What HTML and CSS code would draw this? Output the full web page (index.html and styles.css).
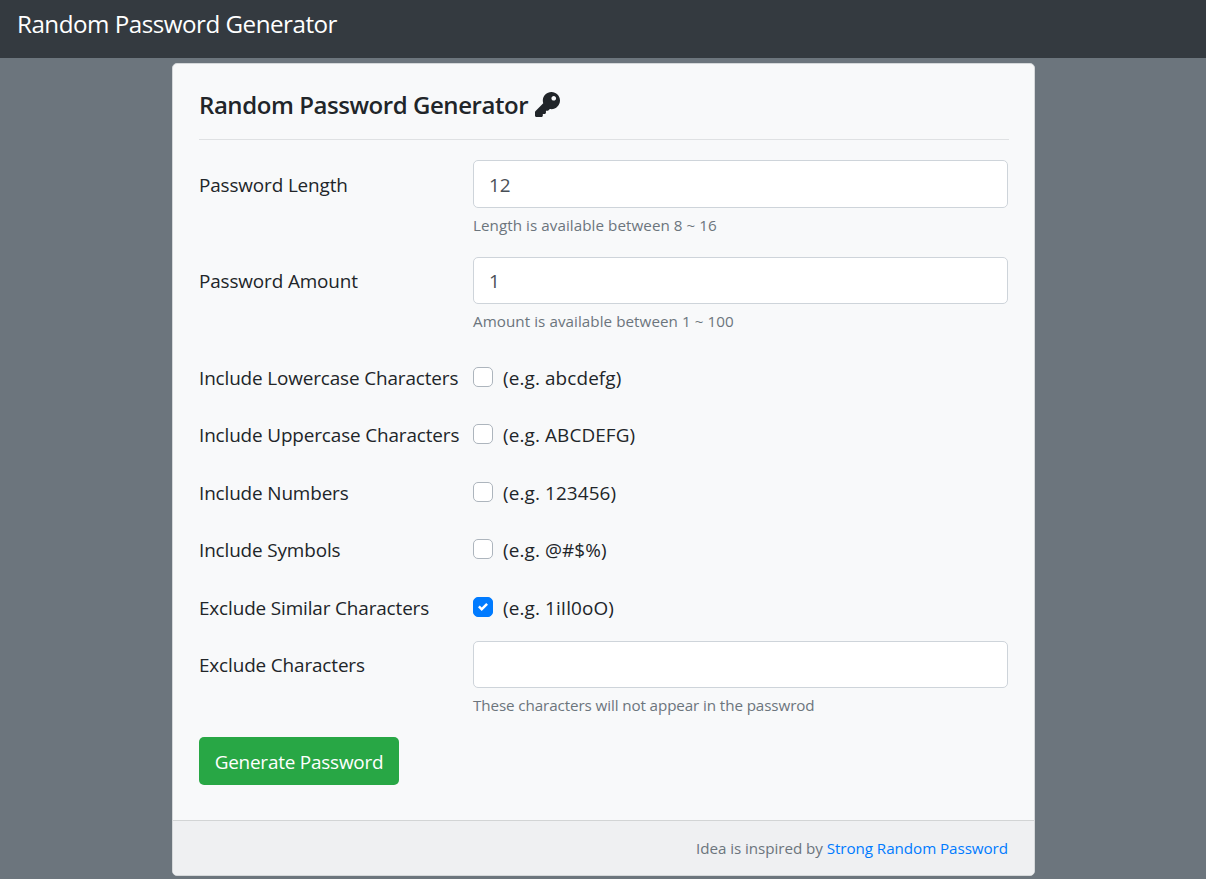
FILE: index.html
```html
<!DOCTYPE html>
<html lang="en">
<head>
<meta charset="utf-8">
<title>Random Password Generator</title>
<link rel="stylesheet" href="styles.css">
</head>
<body>
<nav class="navbar"><span class="brand">Random Password Generator</span></nav>
<main class="card">
  <div class="card-body">
    <h1 class="title"><span>Random Password Generator</span>
      <svg class="key" viewBox="0 0 512 512"><path fill="currentColor" d="M512 176.001C512 273.203 433.202 352 336 352c-11.22 0-22.19-1.062-32.827-3.069l-24.012 27.014A23.999 23.999 0 0 1 261.223 384H224v40c0 13.255-10.745 24-24 24h-40v40c0 13.255-10.745 24-24 24H24c-13.255 0-24-10.745-24-24v-78.059c0-6.365 2.529-12.47 7.029-16.971l161.802-161.802C163.108 213.814 160 195.271 160 176 160 78.798 238.797.001 335.999 0 433.488-.001 512 78.511 512 176.001zM336 128c0 26.51 21.49 48 48 48s48-21.49 48-48-21.49-48-48-48-48 21.49-48 48z"/></svg>
    </h1>
    <hr class="rule">
    <form class="form">
      <div class="row field">
        <label class="label" for="length">Password Length</label>
        <div><input class="input" id="length" type="text" value="12"><small class="hint">Length is available between 8 ~ 16</small></div>
      </div>
      <div class="row field">
        <label class="label" for="amount">Password Amount</label>
        <div><input class="input" id="amount" type="text" value="1"><small class="hint">Amount is available between 1 ~ 100</small></div>
      </div>
      <div class="row option">
        <span class="label">Include Lowercase Characters</span>
        <label class="check"><span class="box"></span><span>(e.g. abcdefg)</span></label>
      </div>
      <div class="row option">
        <span class="label">Include Uppercase Characters</span>
        <label class="check"><span class="box"></span><span>(e.g. ABCDEFG)</span></label>
      </div>
      <div class="row option">
        <span class="label">Include Numbers</span>
        <label class="check"><span class="box"></span><span>(e.g. 123456)</span></label>
      </div>
      <div class="row option">
        <span class="label">Include Symbols</span>
        <label class="check"><span class="box"></span><span>(e.g. @#$%)</span></label>
      </div>
      <div class="row option">
        <span class="label">Exclude Similar Characters</span>
        <label class="check"><span class="box checked"><svg class="tick" viewBox="0 0 8 8"><path fill="#fff" d="M6.564.75l-3.59 3.612-1.538-1.55L0 4.26 2.974 7.25 8 2.193z"/></svg></span><span>(e.g. 1iIl0oO)</span></label>
      </div>
      <div class="row field">
        <label class="label" for="exclude">Exclude Characters</label>
        <div><input class="input" id="exclude" type="text"><small class="hint exclude-hint">These characters will not appear in the passwrod</small></div>
      </div>
      <button class="button" type="button">Generate Password</button>
    </form>
  </div>
  <footer class="footer"><span>Idea is inspired by <a class="link" href="#">Strong Random Password</a></span></footer>
</main>
</body>
</html>
```
FILE: styles.css
```css
* { box-sizing: border-box; }
body { margin: 0; height: 879px; overflow: hidden; background: #6c757d; color: #212529; font-family: "Open Sans", "Noto Sans", sans-serif; font-size: 18.9px; line-height: 30px; letter-spacing: -0.13px; }
.navbar { height: 58px; padding: 5px 17px; background: #343a40; color: #fff; }
.brand { display: block; font-size: 24.2px; line-height: 38px; letter-spacing: -0.5px; white-space: nowrap; }
.card { width: 863px; height: 813px; margin: 5px 0 0 172px; display: flex; flex-direction: column; background: #f8f9fa; border: 1px solid #d5d8da; border-radius: 5px; overflow: hidden; }
.card-body { flex: 1; padding: 25px 25px 0 26px; }
.title { display: flex; align-items: center; gap: 7px; margin: 0; height: 30px; font-size: 24px; font-weight: 600; line-height: 30px; letter-spacing: -0.44px; white-space: nowrap; }
.title > span { padding-top: 1px; }
.key { width: 25px; height: 25px; margin-top: 1px; }
.rule { margin: 20px 0 20.45px; border: 0; border-top: 1px solid #dfe1e3; }
.form { margin: 0; }
.row { display: grid; grid-template-columns: 274px 535px; }
.field { height: 96.25px; }
.option { height: 57.52px; align-content: start; }
.label { line-height: 30px; padding-top: 10px; white-space: nowrap; }
.field .label { padding-top: 9.7px; }
.input { display: block; width: 100%; height: 47.5px; padding: 2px 15px 0; border: 1px solid #ced4da; border-radius: 5px; background: #fff; color: #495057; font: inherit; letter-spacing: inherit; outline: 0; }
.hint { display: block; margin-top: 4px; font-size: 15.2px; line-height: 26px; letter-spacing: 0.06px; color: #6c757d; white-space: nowrap; }
.exclude-hint { letter-spacing: -0.1px; }
.check { display: flex; gap: 10px; padding-top: 10px; line-height: 30px; letter-spacing: 0.12px; white-space: nowrap; }
.box { display: flex; align-items: center; justify-content: center; width: 20px; height: 20px; margin-top: 4px; border: 1px solid #adb5bd; border-radius: 5px; background: #fff; }
.checked { background: #007bff; border-color: #007bff; }
.tick { width: 10px; height: 10px; }
.button { display: block; width: 200px; height: 48px; padding: 2px 0 0; border: 0; border-radius: 5px; background: #28a745; color: #fff; font: inherit; letter-spacing: -0.2px; white-space: nowrap; }
.footer { height: 55px; padding: 12px 26px 0; border-top: 1px solid #d2d4d5; background: #eff0f2; color: #6c757d; font-size: 15.2px; letter-spacing: -0.06px; text-align: right; }
.link { color: #007bff; text-decoration: none; }
```
